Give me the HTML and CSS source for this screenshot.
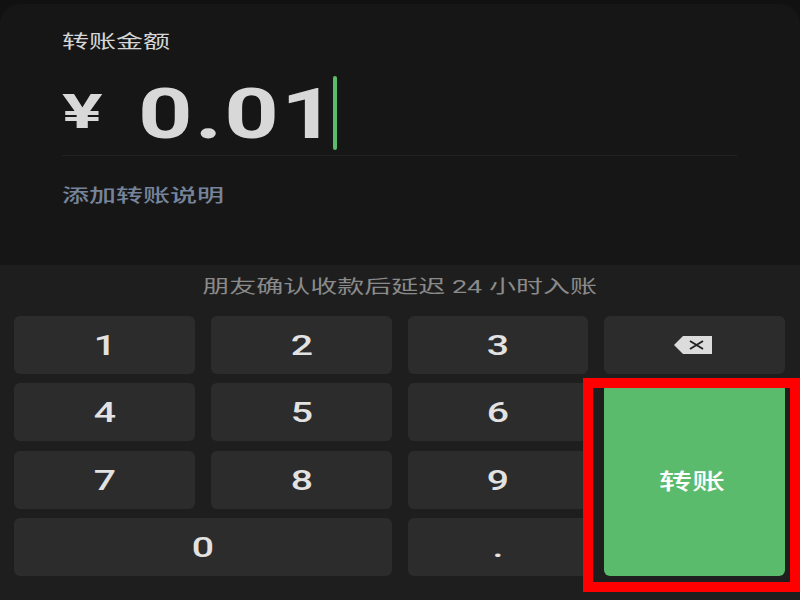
FILE: index.html
```html
<!DOCTYPE html>
<html lang="zh-CN">
<head>
  <meta charset="UTF-8">
  <title>转账</title>
  <link rel="stylesheet" href="styles.css">
</head>
<body>
  <div class="screen">
    <!-- Сумма -->
    <div class="amount-panel">
      <div class="amount-label"><span class="wide">转账金额</span></div>
      <div class="amount-row">
        <span class="amount-currency">¥</span>
        <span class="amount-value">0.01</span>
        <span class="amount-caret"></span>
      </div>
      <div class="amount-note"><span class="wide">添加转账说明</span></div>
    </div>
    <!-- Клавиатура -->
    <div class="keyboard">
      <div class="keyboard-hint"><span class="wide">朋友确认收款后延迟 24 小时入账</span></div>
      <div class="keys">
        <div class="key"><span class="wide">1</span></div>
        <div class="key"><span class="wide">2</span></div>
        <div class="key"><span class="wide">3</span></div>
        <div class="key key-icon">
          <svg class="key-back" width="40" height="20" viewBox="0 0 40 20">
            <path d="M10 1H39V19H10L1 10Z" fill="#dcdcdc"/>
            <path d="M17 6L30 14M30 6L17 14" stroke="#222" stroke-width="2" fill="none"/>
          </svg>
        </div>
        <div class="key"><span class="wide">4</span></div>
        <div class="key"><span class="wide">5</span></div>
        <div class="key"><span class="wide">6</span></div>
        <div class="key key-send"><span class="wide">转账</span></div>
        <div class="key"><span class="wide">7</span></div>
        <div class="key"><span class="wide">8</span></div>
        <div class="key"><span class="wide">9</span></div>
        <div class="key key-zero"><span class="wide">0</span></div>
        <div class="key"><span class="wide">.</span></div>
      </div>
    </div>
    <div class="highlight-box"></div>
  </div>
</body>
</html>
```
FILE: styles.css
```css
body {
  margin: 0;
  background: #1e1e1e;
  font-family: Roboto, "Noto Sans CJK SC", sans-serif;
}
.screen {
  width: 800px;
  height: 600px;
  overflow: hidden;
  display: flex;
  flex-direction: column;
  position: relative;
  background: #111;
}
.wide {
  display: inline-block;
  transform: scaleX(1.4);
}
/* Сумма */
.amount-panel {
  height: 261px;
  margin-top: 4px;
  padding: 0 63px 0 62px;
  background: #161616;
  border-radius: 20px 20px 0 0;
}
.amount-label {
  margin-top: 26px;
  height: 24px;
  line-height: 24px;
  font-size: 18px;
  color: #d6d6d6;
}
.amount-label .wide, .amount-note .wide {
  transform-origin: left center;
  transform: scaleX(1.5);
}
.amount-row {
  display: flex;
  align-items: center;
  height: 83px;
  margin-top: 18px;
  border-bottom: 1px solid #222;
  color: #d8d8d8;
  font-weight: 700;
}
.amount-currency {
  width: 76px;
  margin-top: -5px;
  font-size: 49px;
  transform: scaleX(1.55);
  transform-origin: left center;
}
.amount-value {
  width: 195px;
  font-size: 70px;
  letter-spacing: 1.5px;
  white-space: nowrap;
  transform: scaleX(1.36);
  transform-origin: left center;
}
.amount-caret {
  width: 4px;
  height: 74px;
  margin-top: -1px;
  border-radius: 2px;
  background: #5abb6c;
}
.amount-note {
  margin-top: 28px;
  height: 24px;
  line-height: 24px;
  font-size: 18px;
  font-weight: 500;
  color: #76849b;
}
/* Клавиатура */
.keyboard {
  flex: 1;
  background: #1e1e1e;
  padding: 0 15px 24px 14px;
}
.keyboard-hint {
  margin-top: 10px;
  height: 24px;
  line-height: 24px;
  text-align: center;
  font-size: 18px;
  color: #8a8a8a;
}
.keyboard-hint .wide { transform: scaleX(1.5); }
.keys {
  margin-top: 17px;
  display: grid;
  grid-template-columns: repeat(4, 1fr);
  grid-auto-rows: 58px;
  column-gap: 16px;
  row-gap: 9.5px;
}
.key {
  display: flex;
  align-items: center;
  justify-content: center;
  padding: 1px 0 0 1px;
  background: #2c2c2c;
  border-radius: 6px;
  font-size: 28px;
  font-weight: 500;
  color: #e2e2e2;
}
.key-zero { grid-column: 1 / 3; }
.key-icon { padding: 0; }
.key-send {
  grid-column: 4;
  grid-row: 2 / 5;
  background: #5abb6c;
  font-size: 22px;
  color: #fff;
  padding: 0 5px 2px 0;
}
.key-send .wide { transform: scaleX(1.5); }
.key-back { margin-right: 3px; }
.highlight-box {
  position: absolute;
  left: 583px;
  top: 378px;
  width: 197px;
  height: 194px;
  border: 10px solid #f00;
}
```
